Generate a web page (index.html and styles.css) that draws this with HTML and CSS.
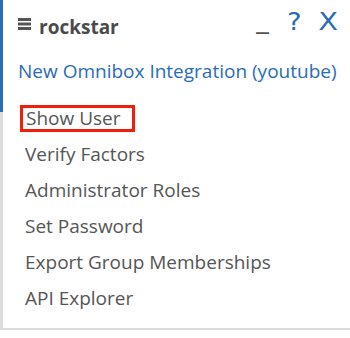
FILE: index.html
```html
<!DOCTYPE html>
<html lang="en">
<head>
    <meta charset="UTF-8" />
    <title>rockstar</title>
    <link rel="stylesheet" href="styles.css">
</head>
<body>
    <div class="panel">
        <div class="header">
            <div class="brand">
                <svg class="menu-icon" width="13" height="12" viewBox="0 0 13 12">
                    <rect x="0" y="0" width="13" height="3" fill="#555"/>
                    <rect x="0" y="4.5" width="13" height="3" fill="#555"/>
                    <rect x="0" y="9" width="13" height="3" fill="#555"/>
                </svg>
                <span class="title">rockstar</span>
            </div>
            <div class="actions">
                <span class="minimize">_</span>
                <span class="help">?</span>
                <span class="close">X</span>
            </div>
        </div>
        <div class="app-name">New Omnibox Integration (youtube)</div>
        <ul class="menu">
            <li><span class="selected">Show User</span></li>
            <li><span>Verify Factors</span></li>
            <li><span>Administrator Roles</span></li>
            <li><span>Set Password</span></li>
            <li><span>Export Group Memberships</span></li>
            <li><span>API Explorer</span></li>
        </ul>
    </div>
</body>
</html>
```

FILE: styles.css
```css
body {
    margin: 0;
    font-family: "Open Sans", Arial, sans-serif;
    background: #fff;
}
.panel {
    width: 350px;
    height: 330px;
    box-sizing: border-box;
    border-left: 3px solid #dcdcdc;
    border-bottom: 2px solid #dcdcdc;
    position: relative;
}
.panel:before {
    content: "";
    position: absolute;
    left: -3px;
    top: 0;
    width: 3px;
    height: 112px;
    background: #2b6cb8;
}
.header {
    display: flex;
    justify-content: space-between;
    align-items: center;
    height: 34px;
    padding: 10px 14px 0 15px;
}
.brand {
    display: flex;
    align-items: center;
    gap: 8px;
}
.menu-icon {
    margin-bottom: 6px;
}
.title {
    font-weight: bold;
    font-size: 19px;
    color: #4a4a4a;
}
.actions {
    display: flex;
    align-items: center;
    gap: 17px;
    font-family: "DejaVu Sans", sans-serif;
    margin-top: -10px;
    line-height: 24px;
}
.minimize {
    color: #555;
    font-size: 25px;
    margin-top: -4px;
    margin-right: 2px;
}
.help {
    color: #2b6cb8;
    font-size: 24px;
    transform: scaleX(1.15);
}
.close {
    color: #2b6cb8;
    font-size: 24px;
    transform: scaleX(1.2);
    margin-left: 2px;
}
.app-name {
    color: #2b6cb8;
    font-size: 19px;
    line-height: 24px;
    padding: 15px 0 0 15px;
}
.menu {
    list-style: none;
    margin: 17px 0 0;
    padding: 0 0 0 16px;
}
.menu li {
    display: flex;
    align-items: center;
    height: 36px;
    font-size: 19px;
    color: #555;
}
.menu li span {
    padding: 0 8px 0 6px;
}
.menu li .selected {
    border: 3px solid #f21e0c;
    line-height: 21px;
    padding: 0 11px 0 3px;
    margin-left: 1px;
}
```
